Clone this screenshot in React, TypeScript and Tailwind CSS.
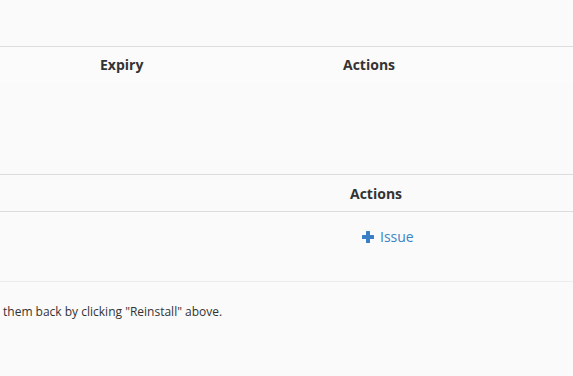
export default function App() {
    return (
        <div className="h-screen w-full overflow-hidden bg-[#fafafa] text-[#333] font-['Open_Sans',sans-serif]">
            <div className="h-[46px]" />

            {/* Certificates table */}
            <div className="border-t border-[#dcdcdc]">
                <div className="grid grid-cols-[92px_243px_1fr] h-[35px] items-center text-[14px] font-bold bg-[#fbfbfb]">
                    <div />
                    <div className="pl-2">Expiry</div>
                    <div className="pl-2">Actions</div>
                </div>
                <div className="h-[92px]" />
            </div>

            {/* Keys table */}
            <div className="border-t border-[#dcdcdc]">
                <div className="grid grid-cols-[342px_1fr] h-[36px] items-center text-[14px] font-bold">
                    <div />
                    <div className="pl-2">Actions</div>
                </div>
                <div className="border-t border-[#dcdcdc] grid grid-cols-[354px_1fr] h-[70px] items-center text-[14px]">
                    <div />
                    <a className="pl-2 flex items-center gap-[6px] text-[#3d84c6] -mt-[20px]">
                        <svg width="12" height="12" viewBox="0 0 12 12" className="shrink-0">
                            <rect x="4" y="0" width="4" height="12" rx="0.5" fill="#3a7fc6" />
                            <rect x="0" y="4" width="12" height="4" rx="0.5" fill="#3a7fc6" />
                        </svg>
                        <span>Issue</span>
                    </a>
                </div>
                <div className="border-t border-[#ececec]" />
            </div>

            <p className="pl-[3px] pt-[21px] text-[12px] leading-[17px]">
                them back by clicking "Reinstall" above.
            </p>
        </div>
    );
}
